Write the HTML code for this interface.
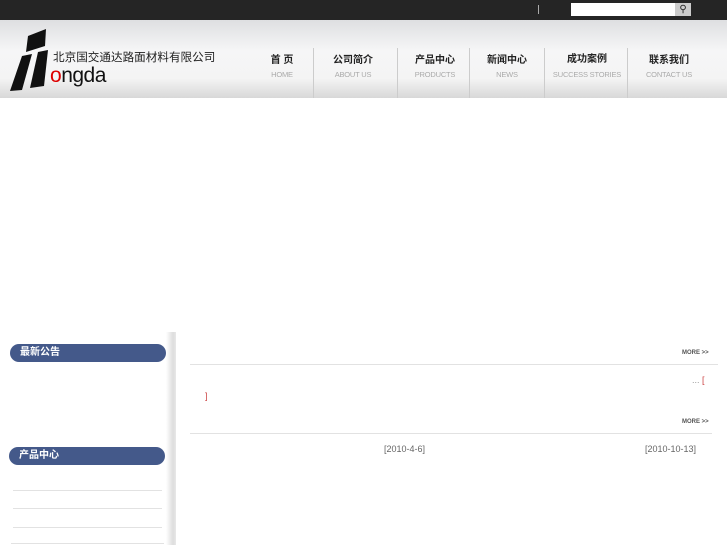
<!DOCTYPE html>
<html><head><meta charset="utf-8"><style>
*{margin:0;padding:0}
body{width:727px;height:545px;position:relative;background:#fff;font-family:"Liberation Sans","Noto Sans CJK SC",sans-serif;overflow:hidden}
.a{position:absolute}
#top{left:0;top:0;width:727px;height:20px;background:#252525}
#hd{left:0;top:20px;width:727px;height:78px;background:linear-gradient(#dedfe1,#f6f6f7 40%,#f4f4f4 75%,#d8d8d8)}
.nav{top:51px;text-align:center;font-size:10px;font-weight:bold;color:#222}
.nav span{display:block;font-size:7.5px;font-weight:normal;color:#aaa;margin-top:4px;letter-spacing:-.2px}
.sep{top:48px;width:1px;height:50px;background:#ccc}
.bar{height:18px;border-radius:9px;background:#44598a;color:#fff;font-size:10px;font-weight:bold;line-height:18px;padding-left:10px;box-sizing:border-box}
.hl{height:1px;background:#e2e2e2}
.more{font-size:6px;color:#555;font-weight:bold}
.dt{font-size:9px;color:#666}
</style></head><body>
<div class="a" id="top"></div>
<div class="a" style="left:538px;top:5px;width:1px;height:9px;background:#aaa"></div>
<div class="a" style="left:571px;top:3px;width:104px;height:13px;background:#fff"></div>
<div class="a" style="left:675px;top:3px;width:16px;height:13px;background:#ccc;font-size:10px;line-height:13px;text-align:center;color:#222">&#9906;</div>
<div class="a" id="hd"></div>
<svg class="a" style="left:8px;top:28px" width="50" height="64">
<polygon points="20,8 38,1 37,18 18,24" fill="#111"/>
<polygon points="14,28 24,26 14,62 2,63" fill="#111"/>
<polygon points="30,24 40,22 36,58 22,60" fill="#111"/>
</svg>
<div class="a" style="left:50px;top:64px;font-size:21px;color:#111;letter-spacing:-.5px"><span style="color:#d00">o</span>ngda</div>
<div class="a" style="left:53px;top:49px;font-size:11.6px;color:#222">北京国交通达路面材料有限公司</div>
<div class="a nav" style="left:262px;width:40px">首 页<span>HOME</span></div>
<div class="a sep" style="left:313px"></div>
<div class="a nav" style="left:323px;width:60px">公司简介<span>ABOUT US</span></div>
<div class="a sep" style="left:397px"></div>
<div class="a nav" style="left:405px;width:60px">产品中心<span>PRODUCTS</span></div>
<div class="a sep" style="left:469px"></div>
<div class="a nav" style="left:477px;width:60px">新闻中心<span>NEWS</span></div>
<div class="a sep" style="left:544px"></div>
<div class="a nav" style="left:547px;width:80px;top:50px">成功案例<span style="margin-top:5px">SUCCESS STORIES</span></div>
<div class="a sep" style="left:627px"></div>
<div class="a nav" style="left:639px;width:60px">联系我们<span>CONTACT US</span></div>
<div class="a" style="left:166px;top:332px;width:10px;height:213px;background:linear-gradient(90deg,#fff,#ddd 70%,#e8e8e8)"></div>
<div class="a bar" style="left:10px;top:344px;width:156px">最新公告</div>
<div class="a bar" style="left:9px;top:447px;width:156px">产品中心</div>
<div class="a hl" style="left:13px;top:490px;width:149px"></div>
<div class="a hl" style="left:13px;top:508px;width:149px"></div>
<div class="a hl" style="left:13px;top:527px;width:149px"></div>
<div class="a hl" style="left:11px;top:543px;width:153px"></div>
<div class="a more" style="left:682px;top:350px">MORE &gt;&gt;</div>
<div class="a hl" style="left:190px;top:364px;width:528px"></div>
<div class="a" style="left:692px;top:375px;font-size:9px;color:#999">...<span style="color:#c44"> [</span></div>
<div class="a" style="left:205px;top:391px;font-size:9px;color:#c44">]</div>
<div class="a more" style="left:682px;top:419px">MORE &gt;&gt;</div>
<div class="a hl" style="left:190px;top:433px;width:522px"></div>
<div class="a dt" style="left:384px;top:444px">[2010-4-6]</div>
<div class="a dt" style="left:645px;top:444px">[2010-10-13]</div>
</body></html>
